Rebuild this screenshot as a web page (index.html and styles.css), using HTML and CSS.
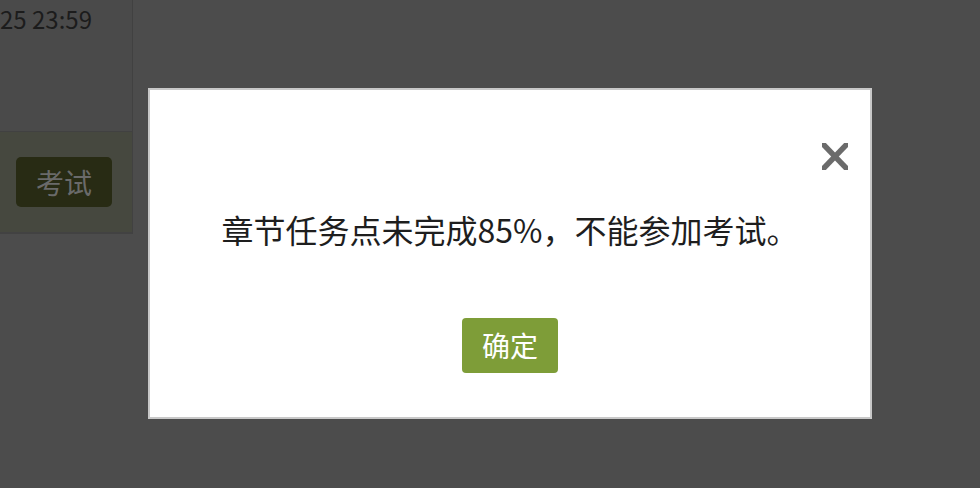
FILE: index.html
```html
<!DOCTYPE html>
<html lang="zh-CN">
<head>
<meta charset="utf-8">
<title>提示</title>
<link rel="stylesheet" href="styles.css">
</head>
<body>
<div class="page">
  <div class="task-col">
    <div class="time-cell">25 23:59</div>
    <div class="action-cell">
      <span class="exam-btn">考试</span>
    </div>
  </div>
</div>
<div class="mask">
  <div class="dialog">
    <span class="close" aria-label="关闭">
      <svg width="26" height="27" viewBox="0 0 26 27">
        <line x1="-2" y1="-2" x2="28" y2="29" stroke="#6b6b6b" stroke-width="5.6"/>
        <line x1="28" y1="-2" x2="-2" y2="29" stroke="#6b6b6b" stroke-width="5.6"/>
      </svg>
    </span>
    <p class="msg">章节任务点未完成85%，不能参加考试。</p>
    <span class="ok-btn">确定</span>
  </div>
</div>
</body>
</html>
```

FILE: styles.css
```css
html, body {
  margin: 0;
  padding: 0;
}
body {
  background: #4c4c4c;
  font-family: "Noto Sans CJK SC", "Noto Sans", sans-serif;
  width: 980px;
  height: 488px;
  overflow: hidden;
}
.page {
  display: flex;
}
.task-col {
  width: 132px;
  border-right: 1px solid #414141;
  display: flex;
  flex-direction: column;
}
.time-cell {
  height: 132px;
  background: #4a4a4a;
  border-bottom: 1px solid #414141;
  box-sizing: border-box;
  font-size: 24px;
  color: #1c1c1c;
  line-height: 38px;
  white-space: nowrap;
}
.action-cell {
  height: 102px;
  box-sizing: border-box;
  background: #46483f;
  border-bottom: 2px solid #424242;
  padding: 25px 0 0 16px;
}
.exam-btn {
  display: inline-block;
  height: 50px;
  line-height: 50px;
  padding: 0 20px;
  font-size: 28px;
  color: #6a6a6a;
  background: #282b14;
  border-radius: 5px;
}
.mask {
  position: fixed;
  inset: 0;
}
.dialog {
  position: absolute;
  left: 148px;
  top: 88px;
  width: 720px;
  border: 2px solid #c8c8c8;
  background: #ffffff;
  padding: 123px 0 44px;
  display: flex;
  flex-direction: column;
  align-items: center;
}
.close {
  position: absolute;
  right: 22px;
  top: 53px;
  width: 26px;
  height: 27px;
  display: block;
}
.close svg {
  display: block;
  filter: blur(0.4px);
}
.msg {
  margin: 0 0 73px;
  font-size: 32px;
  line-height: 32px;
  color: #1e1e1e;
  white-space: nowrap;
}
.ok-btn {
  display: block;
  height: 55px;
  line-height: 55px;
  padding: 0 20px;
  font-size: 28px;
  color: #ffffff;
  background: #7e9d38;
  border-radius: 4px;
}
```
